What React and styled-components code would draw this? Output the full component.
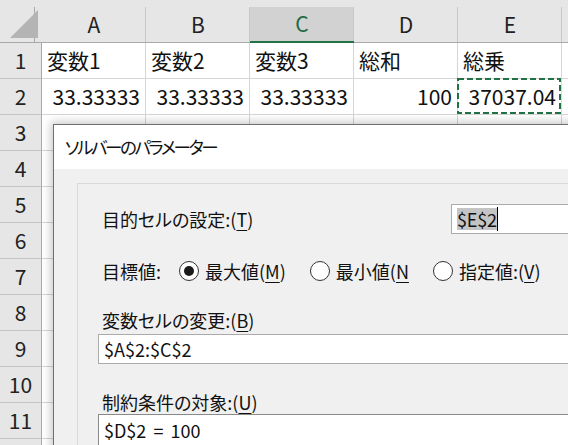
import React from "react";
import styled, { createGlobalStyle } from "styled-components";

const Global = createGlobalStyle`
  html, body { margin: 0; padding: 0; background: #fff; overflow: hidden; }
  body { font-family: "Noto Sans CJK JP", "Noto Sans", sans-serif; }
  * { box-sizing: border-box; }
`;

const Page = styled.div`
  position: relative;
  width: 568px;
  height: 445px;
  overflow: hidden;
`;

const Sheet = styled.div`
  display: grid;
  grid-template-columns: 42px repeat(6, 104px);
  grid-template-rows: 43px;
  grid-auto-rows: 36px;
  font-size: 21px;
  color: #111;
  line-height: 1;
`;

const Corner = styled.div`
  position: relative;
  background: linear-gradient(#a9a9a9, #a9a9a9) right 7px top 7px / 1px calc(100% - 7px) no-repeat, #e6e6e6;
  border-bottom: 1px solid #a9a9a9;
`;

const Triangle = styled.svg`
  position: absolute;
  left: 10px;
  top: 10px;
`;

const ColHeader = styled.div`
  display: flex;
  align-items: center;
  justify-content: center;
  padding-top: 6px;
  color: ${(p) => (p.$selected ? "#1d6b3f" : "#222")};
  background:
    linear-gradient(#c8c8c8, #c8c8c8) right top 7px / 1px calc(100% - 7px) no-repeat,
    ${(p) => (p.$selected ? "linear-gradient(to bottom, #e6e6e6 7px, #d2d2d2 7px)" : "#e6e6e6")};
  border-bottom: ${(p) => (p.$selected ? "2px solid #217346" : "1px solid #a9a9a9")};
`;

const RowHeader = styled.div`
  display: flex;
  align-items: center;
  justify-content: center;
  background: #e6e6e6;
  color: #222;
  border-right: 1px solid #a9a9a9;
  border-bottom: 1px solid #c4c4c4;
`;

const Cell = styled.div`
  position: relative;
  display: flex;
  align-items: center;
  justify-content: ${(p) => (p.$num ? "flex-end" : "flex-start")};
  padding: 0 ${(p) => (p.$num ? "5px" : "0")} 0 ${(p) => (p.$num ? "0" : "5px")};
  border-right: 1px solid #d6d6d6;
  border-bottom: 1px solid #d6d6d6;
  white-space: nowrap;
`;

const Ants = styled.svg`
  position: absolute;
  left: -1px;
  top: -1px;
  pointer-events: none;
`;

const Dialog = styled.div`
  position: absolute;
  left: 53px;
  top: 124px;
  width: 640px;
  height: 420px;
  border: 1px solid #6f6f6f;
  background: #f0f0f0;
  box-shadow: 0 0 9px 2px rgba(0, 0, 0, 0.22);
  font-size: 18px;
  color: #111;
  font-feature-settings: "palt";
`;

const TitleBar = styled.div`
  height: 44px;
  background: #fff;
  display: flex;
  align-items: center;
  padding-left: 11px;
  padding-bottom: 2px;
  font-size: 17.5px;
  letter-spacing: -2.4px;
`;

const Body = styled.div`
  padding: 14px 0 0 23px;
`;

const Group = styled.div`
  border: 1px solid #d9d9d9;
  border-right: none;
  border-bottom: none;
  padding: 20px 0 0 24px;
  height: 400px;
`;

const TargetRow = styled.div`
  display: grid;
  grid-template-columns: 349px 1fr;
  align-items: center;
  height: 30px;
`;

const Label = styled.div`
  height: 24px;
  line-height: 24px;
  margin-top: ${(p) => p.$mt || 0}px;
  white-space: nowrap;
`;

const Key = styled.span`
  text-decoration: underline;
  text-underline-offset: 3px;
  text-decoration-thickness: 1px;
`;

const Field = styled.div`
  height: ${(p) => p.$h || 30}px;
  margin-left: ${(p) => p.$ml ?? -4}px;
  margin-top: ${(p) => p.$mt || 0}px;
  background: #fff;
  border: 1px solid ${(p) => (p.$dark ? "#8a8a8a" : "#ababab")};
  border-right: none;
  display: flex;
  align-items: ${(p) => (p.$top ? "flex-start" : "center")};
  padding: ${(p) => (p.$top ? "2px" : "0")} 0 0 5px;
  white-space: pre;
  word-spacing: ${(p) => (p.$top ? "3px" : "0")};
`;

const Selected = styled.span`
  background: #c4c4c4;
  height: 22px;
  display: inline-flex;
  align-items: center;
  letter-spacing: -0.2px;
`;

const Caret = styled.span`
  display: inline-block;
  width: 1px;
  height: 24px;
  background: #000;
`;

const RadioRow = styled.div`
  display: flex;
  align-items: center;
  height: 24px;
  margin-top: 25px;
  white-space: nowrap;
`;

const RadioLabel = styled.span`
  margin-right: 18px;
`;

const Option = styled.span`
  display: inline-flex;
  align-items: center;
  gap: 6px;
  margin-right: 24px;
`;

const Radio = styled.span`
  position: relative;
  flex: none;
  width: 20px;
  height: 20px;
  border-radius: 50%;
  border: 1.5px solid #333;
  background: #fff;
  &::after {
    content: "";
    display: ${(p) => (p.$checked ? "block" : "none")};
    position: absolute;
    left: 50%;
    top: 50%;
    width: 10px;
    height: 10px;
    margin: -5px 0 0 -5px;
    border-radius: 50%;
    background: #1a1a1a;
  }
`;

const cols = ["A", "B", "C", "D", "E", "F"];
const rows = [
  ["変数1", "変数2", "変数3", "総和", "総乗", ""],
  ["33.33333", "33.33333", "33.33333", "100", "37037.04", ""],
];

export default function App() {
  return (
    <Page>
      <Global />
      <Sheet>
        <Corner>
          <Triangle width="28" height="28" viewBox="0 0 28 28">
            <polygon points="28,0 28,28 0,28" fill="#b4b4b4" />
          </Triangle>
        </Corner>
        {cols.map((c) => (
          <ColHeader key={c} $selected={c === "C"}>{c === "F" ? "" : c}</ColHeader>
        ))}
        {Array.from({ length: 12 }, (_, r) => (
          <React.Fragment key={r}>
            <RowHeader>{r < 11 ? r + 1 : ""}</RowHeader>
            {cols.map((c, ci) => {
              const v = rows[r] ? rows[r][ci] : "";
              const isNum = r === 1;
              const sel = r === 1 && c === "E";
              return (
                <Cell key={c} $num={isNum}>
                  {v}
                  {sel && (
                    <Ants width="105" height="37" viewBox="0 0 105 37">
                      <rect x="1" y="1" width="102" height="34" fill="none" stroke="#217346" strokeWidth="2" strokeDasharray="6 3" />
                    </Ants>
                  )}
                </Cell>
              );
            })}
          </React.Fragment>
        ))}
      </Sheet>

      <Dialog>
        <TitleBar>ソルバーのパラメーター</TitleBar>
        <Body>
          <Group>
            <TargetRow>
              <span>目的セルの設定:(<Key>T</Key>)</span>
              <Field $ml={0}>
                <Selected>$E$2</Selected>
                <Caret />
              </Field>
            </TargetRow>
            <RadioRow>
              <RadioLabel>目標値:</RadioLabel>
              <Option><Radio $checked /><span>最大値(<Key>M</Key>)</span></Option>
              <Option><Radio /><span>最小値(<Key>N</Key></span></Option>
              <Option><Radio /><span>指定値:(<Key>V</Key>)</span></Option>
            </RadioRow>
            <Label $mt={25}>変数セルの変更:(<Key>B</Key>)</Label>
            <Field $mt={2}>$A$2:$C$2</Field>
            <Label $mt={26}>制約条件の対象:(<Key>U</Key>)</Label>
            <Field $h={80} $top $dark>$D$2 = 100</Field>
          </Group>
        </Body>
      </Dialog>
    </Page>
  );
}
